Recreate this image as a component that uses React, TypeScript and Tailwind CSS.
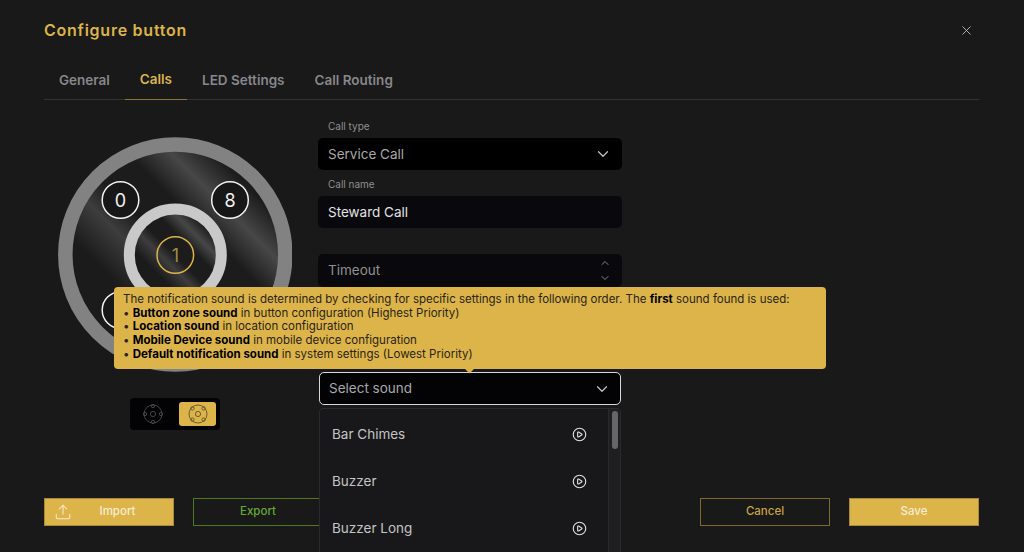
import { ChevronDown, ChevronUp, CirclePlay, Upload, X } from "lucide-react"

const sounds = ["Bar Chimes", "Buzzer", "Buzzer Long", "Chime"]

const tabs = [
  { label: "General", active: false },
  { label: "Calls", active: true },
  { label: "LED Settings", active: false },
  { label: "Call Routing", active: false },
]

function Wheel() {
  const zones = [
    { x: 62.5, y: 63, n: "0" },
    { x: 172, y: 63, n: "8" },
    { x: 62.5, y: 173, n: "" },
    { x: 172, y: 173, n: "" },
  ]
  return (
    <svg width="234" height="236" viewBox="0 0 234 236" aria-hidden>
      <defs>
        <linearGradient id="sheen" x1="0" y1="1" x2="1" y2="0">
          <stop offset="0" stopColor="#1a1a1a" />
          <stop offset="0.3" stopColor="#1b1b1b" />
          <stop offset="0.42" stopColor="#3d3d3d" />
          <stop offset="0.5" stopColor="#1c1c1c" />
          <stop offset="0.62" stopColor="#1c1c1c" />
          <stop offset="0.72" stopColor="#474747" />
          <stop offset="0.82" stopColor="#1c1c1c" />
          <stop offset="1" stopColor="#1a1a1a" />
        </linearGradient>
      </defs>
      <circle cx="117.3" cy="117.5" r="110" fill="url(#sheen)" stroke="#828282" strokeWidth="14.5" />
      <circle cx="117.3" cy="118" r="46" fill="url(#sheen)" stroke="#c9c9c9" strokeWidth="11" />
      {zones.map((z, i) => (
        <g key={i}>
          <circle cx={z.x} cy={z.y} r="18.3" fill="#171717" stroke="#f2f2f2" strokeWidth="1.5" />
          <text x={z.x} y={z.y + 6.5} textAnchor="middle" fontSize="18" fill="#f2f2f2" fontFamily="Inter, sans-serif">
            {z.n}
          </text>
        </g>
      ))}
      <circle cx="117.3" cy="118" r="18.3" fill="none" stroke="#dcb44a" strokeWidth="1.5" />
      <text x="117.3" y="124.5" textAnchor="middle" fontSize="18" fill="#a88a3e" fontFamily="Inter, sans-serif">
        1
      </text>
    </svg>
  )
}

function LayoutIcon({ diagonal, color }: { diagonal: boolean; color: string }) {
  const d = diagonal ? 5.6 : 0
  const a = diagonal ? 5.6 : 8
  const pts = diagonal
    ? [
        [10 - a, 10 - d],
        [10 + a, 10 - d],
        [10 - a, 10 + d],
        [10 + a, 10 + d],
      ]
    : [
        [10, 10 - a],
        [10, 10 + a],
        [10 - a, 10],
        [10 + a, 10],
      ]
  return (
    <svg width="20" height="20" viewBox="0 0 20 20" fill="none" stroke={color} strokeWidth="0.9" aria-hidden>
      <circle cx="10" cy="10" r="9" />
      <circle cx="10" cy="10" r="2.6" />
      {pts.map(([x, y], i) => (
        <circle key={i} cx={x} cy={y} r="1.7" />
      ))}
    </svg>
  )
}

export default function App() {
  return (
    <div
      className="relative flex h-[552px] w-full flex-col overflow-hidden bg-[#191919] pl-[44px] pr-[45px] text-[#c4c4c4]"
      style={{ fontFamily: "Inter, 'Noto Sans', sans-serif" }}
    >
      <div className="flex h-[60px] items-start justify-between pt-[20px]">
        <h1 className="text-[16px] leading-[20px] font-semibold tracking-[0.75px] text-[#dcb44a]">Configure button</h1>
        <X className="mr-[5px] mt-[3px] h-[15px] w-[15px] text-[#b5b5b5]" strokeWidth={1.5} />
      </div>

      <div className="flex h-[40px] border-b border-[#333333]">
        {tabs.map((t) => (
          <div
            key={t.label}
            className={
              t.active
                ? "flex h-[40px] items-center border-b border-[#8a7337] px-[15px] text-[13.5px] font-semibold text-[#dcb44a]"
                : "flex h-[40px] items-center px-[15px] text-[13.5px] font-semibold text-[#87878c]"
            }
          >
            {t.label}
          </div>
        ))}
      </div>

      <div className="flex min-h-0 flex-1">
        <div className="w-[274px] shrink-0 pt-[37px] pl-[14px]">
          <Wheel />
          <div className="ml-[72px] mt-[25px] flex h-[32px] w-[90px] items-center justify-between rounded-[4px] bg-[#030306] pl-[13px] pr-[4px]">
            <LayoutIcon diagonal={false} color="#4a4a4a" />
            <div className="flex h-[24px] w-[37px] items-center justify-center rounded-[3px] bg-[#dcb44a]">
              <LayoutIcon diagonal color="#5f5232" />
            </div>
          </div>
        </div>

        <div className="w-[304px] shrink-0 pt-[19px]">
          <div className="mb-[5px] h-[14px] pl-[10px] text-[10px] leading-[14px] text-[#8f8f8f]">Call type</div>
          <div className="flex h-[32px] items-center justify-between rounded-[5px] bg-black pl-[10px] pr-[10px] text-[13.5px] text-[#a8a8a8]">
            <span>Service Call</span>
            <ChevronDown className="h-[18px] w-[18px] text-[#c4c4c4]" strokeWidth={1.6} />
          </div>

          <div className="mb-[5px] mt-[7px] h-[14px] pl-[10px] text-[10px] leading-[14px] text-[#8f8f8f]">Call name</div>
          <div className="flex h-[32px] items-center rounded-[5px] bg-[#09090d] pl-[10px] text-[13.5px] text-[#e2e2e2]">
            Steward Call
          </div>

          <div className="relative mt-[26px] flex h-[33px] items-center rounded-[5px] bg-[#09090d] pl-[10px] text-[13.5px] text-[#8f8f8f]">
            Timeout
            <div className="absolute right-[11px] top-[3px] flex flex-col gap-[3px] text-[#a5a5a5]">
              <ChevronUp className="h-[12px] w-[12px]" strokeWidth={1.6} />
              <ChevronDown className="h-[12px] w-[12px]" strokeWidth={1.6} />
            </div>
          </div>

          <div className="relative mt-[85px]">
            <div className="mx-[1px] flex h-[33px] items-center justify-between rounded-[5px] border border-[#d8d8d8] bg-[#030306] pl-[9px] pr-[9px] text-[13.5px] text-[#a8a8a8]">
              <span>Select sound</span>
              <ChevronDown className="h-[18px] w-[18px] text-[#c4c4c4]" strokeWidth={1.6} />
            </div>

            <div className="absolute left-[1px] top-[36px] z-10 flex h-[160px] w-[302px] overflow-hidden rounded-[4px] border border-[#2a2a2d] bg-[#18181b]">
              <div className="flex-1 pt-[2px]">
                {sounds.map((s) => (
                  <div key={s} className="flex h-[47px] items-center justify-between pl-[12px] pr-[21px] text-[13.5px] text-[#c4c4c4]">
                    <span>{s}</span>
                    <CirclePlay className="h-[15px] w-[15px] text-[#e0e0e0]" strokeWidth={1.8} />
                  </div>
                ))}
              </div>
              <div className="w-[12px] shrink-0 border-l border-[#2a2a2d] bg-[#1f1f22] pl-[3px] pt-[2px]">
                <div className="h-[38px] w-[6px] rounded-full bg-[#666666]" />
              </div>
            </div>
          </div>
        </div>
      </div>

      <div className="mb-[26px] flex h-[28px] text-[11.5px] font-medium">
        <button className="flex w-[130px] items-center border border-[#a88a3e] bg-[#dcb44a] pl-[9px] pr-[10px] text-[#f5ecd2]">
          <Upload className="h-[18px] w-[18px]" strokeWidth={1.4} />
          <span className="flex-1 text-center">Import</span>
        </button>
        <button className="ml-[19px] w-[130px] border border-[#4c7a1e] text-[#65a832]">Export</button>
        <button className="ml-auto w-[130px] border border-[#80682e] text-[#c9a440]">Cancel</button>
        <button className="ml-[19px] w-[130px] border border-[#a88a3e] bg-[#dcb44a] text-[#f5ecd2]">Save</button>
      </div>

      <div className="absolute left-[114px] top-[287px] z-20 h-[82px] w-[712px] rounded-[4px] bg-[#dcb44a] px-[9px] pt-[6px] text-[11.5px] leading-[13.7px] text-[#2a2414]">
        <p>
          The notification sound is determined by checking for specific settings in the following order. The{" "}
          <b className="font-bold text-black">first</b> sound found is used:
        </p>
        <p>• <b className="font-bold text-black">Button zone sound</b> in button configuration (Highest Priority)</p>
        <p>• <b className="font-bold text-black">Location sound</b> in location configuration</p>
        <p>• <b className="font-bold text-black">Mobile Device sound</b> in mobile device configuration</p>
        <p>• <b className="font-bold text-black">Default notification sound</b> in system settings (Lowest Priority)</p>
        <div className="absolute bottom-[-3px] left-[352px] h-[7px] w-[7px] rotate-45 bg-[#dcb44a]" />
      </div>
    </div>
  )
}
